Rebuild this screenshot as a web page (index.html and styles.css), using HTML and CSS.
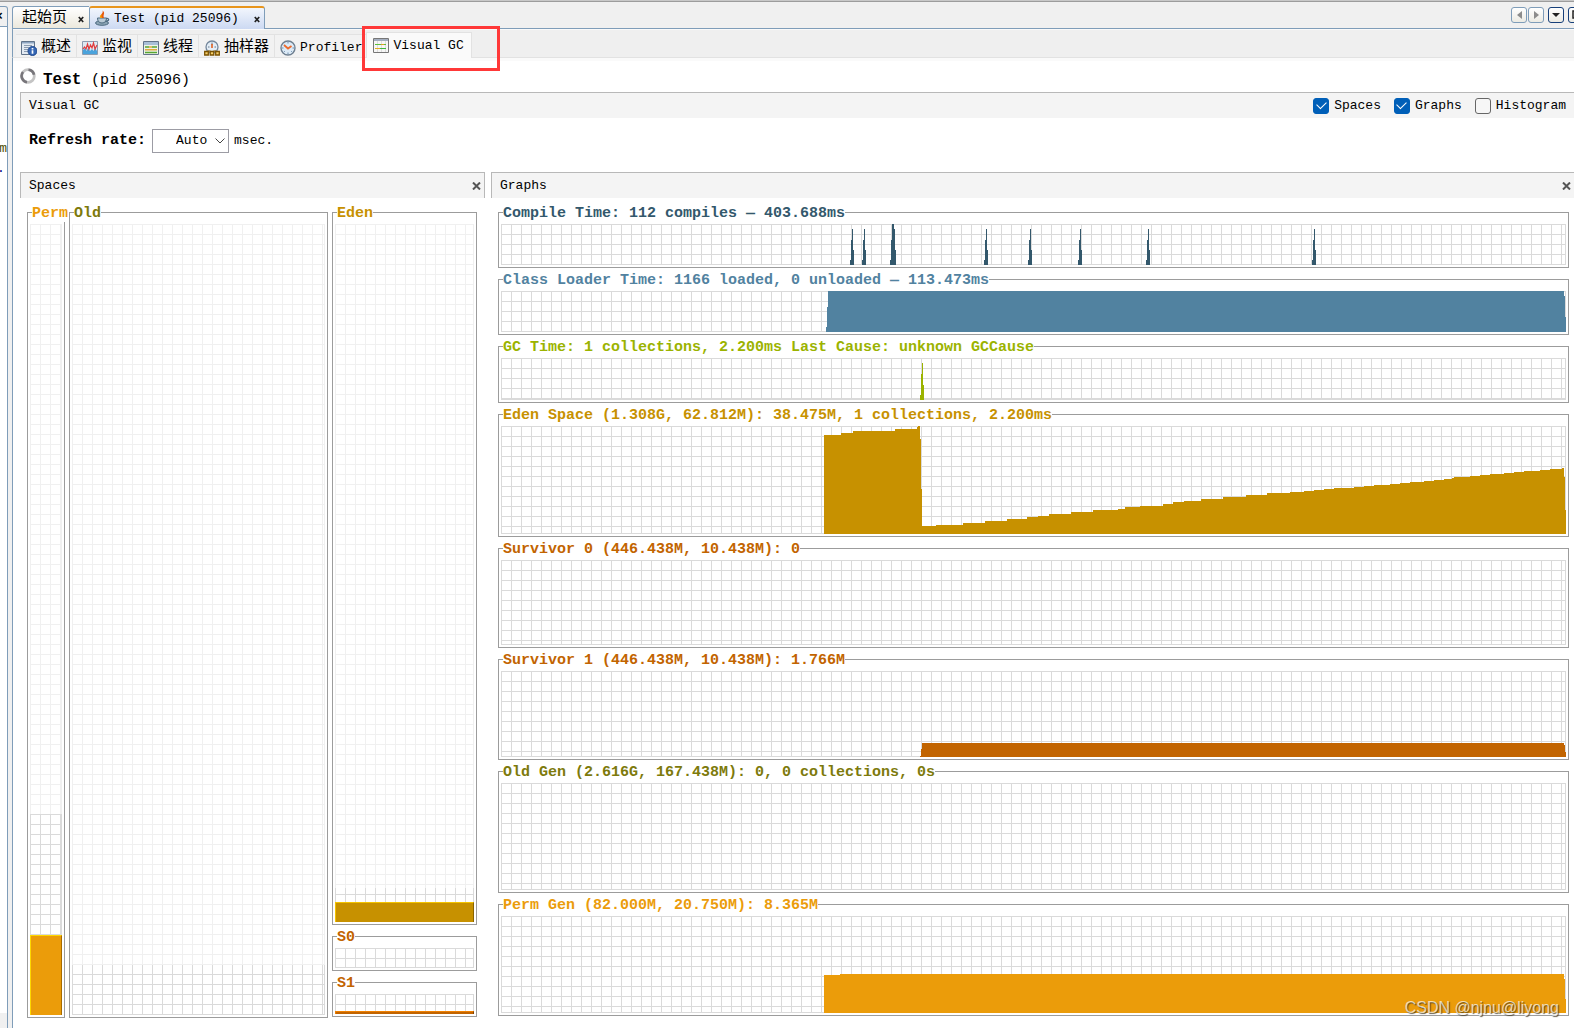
FILE: index.html
```html
<!DOCTYPE html>
<html lang="zh-CN">
<head>
<meta charset="utf-8">
<meta name="viewport" content="width=device-width, initial-scale=1">
<title>Test (pid 25096)</title>
<link rel="stylesheet" href="styles.css">
</head>
<body>
<div class="window">
  <aside class="side">
    <div class="side-tab"><span>×</span></div>
    <div class="side-body">
      <div class="side-line olive">em</div>
      <div class="side-line navy">.</div>
    </div>
    <div class="side-foot"></div>
  </aside>

  <main class="main">
    <nav class="docs">
      <div class="doc"><span class="cjk">起始页</span><button class="doc-close" aria-label="关闭起始页"><svg width="6" height="7" viewBox="0 0 6 7"><path d="M.8 1l4.4 5M5.2 1L.8 6" stroke="#222" stroke-width="1.7"/></svg></button></div>
      <div class="doc current">
        <svg class="icon" width="16" height="16" viewBox="0 0 16 16"><ellipse cx="7" cy="13" rx="6.500" ry="2.300" fill="#8aa3b4" stroke="#4c6a80"/><path d="M2.500 8h9c0 3-1.500 5-4.500 5S2.500 11 2.500 8z" fill="#b9cad6" stroke="#4c6a80"/><path d="M11.500 8.500c3-.5 3 2.500-1 3" fill="none" stroke="#4c6a80" stroke-width="1.300"/><path d="M7 8C3 5 9 4 7.500.5 11 3 7.500 4.500 9 8z" fill="#e8590c"/><path d="M5.500 8C4 6 6 5 6.500 4 7 6 6 6.500 7 8z" fill="#f59f00"/></svg>
        <span>Test (pid 25096)</span>
        <button class="doc-close" aria-label="关闭 Test"><svg width="6" height="7" viewBox="0 0 6 7"><path d="M.8 1l4.4 5M5.2 1L.8 6" stroke="#222" stroke-width="1.7"/></svg></button>
      </div>
      <div class="doc-tools">
        <div class="pair">
          <button class="tool" aria-label="上一个"><svg width="5" height="8" viewBox="0 0 5 8"><path d="M5 0v8L0 4z" fill="#8c8c8c"/></svg></button>
          <button class="tool" aria-label="下一个"><svg width="5" height="8" viewBox="0 0 5 8"><path d="M0 0v8l5-4z" fill="#8c8c8c"/></svg></button>
        </div>
        <button class="tool strong" aria-label="列表"><svg width="8" height="4" viewBox="0 0 8 4"><path d="M0 0h8L4 4z" fill="#222"/></svg></button>
        <button class="tool strong" aria-label="最大化"><svg width="9" height="9" viewBox="0 0 9 9"><path d="M1 1h7v7H1z" fill="none" stroke="#222" stroke-width="1.500"/></svg></button>
      </div>
    </nav>

    <nav class="views">
      <button class="view cjk">
        <svg class="icon" width="16" height="16" viewBox="0 0 16 16"><path d="M.5 1.500h13v13H.5z" fill="#e3eaf2" stroke="#62748a"/><path d="M1 2h12v1.500H1z" fill="#8ea6c2"/><path d="M3 5.500h8M3 7.500h5M3 9.500h4M3 11.500h4" stroke="#8c9cb0"/><circle cx="11.500" cy="11" r="4.500" fill="#3567b5" stroke="#20488c"/><path d="M11.500 8v1.500M11.500 10.300v3.500" stroke="#fff" stroke-width="1.700"/></svg>概述</button>
      <button class="view cjk">
        <svg class="icon" width="16" height="16" viewBox="0 0 16 16"><path d="M.5 1.500h15v13H.5z" fill="#dfe9f2" stroke="#8b9cb0"/><path d="M1 14v-4l2-2 1.500 3L6 8l2 3 2-2 1.500 2L13 8l2 3v3z" fill="#4aa3dc"/><path d="M1 9l1.500-2L4 9l1.500-5L7 9l1.500-4L10 8l1.500-5L13 9l2-4" fill="none" stroke="#e03c3c" stroke-width="1.200"/></svg>监视</button>
      <button class="view cjk">
        <svg class="icon" width="16" height="16" viewBox="0 0 16 16"><path d="M.5 1.500h15v13H.5z" fill="#eef3ea" stroke="#64748a"/><path d="M1 2h14v3H1z" fill="#a9bfd8"/><path d="M2 7h4M9 7h5" stroke="#56a532" stroke-width="1.500"/><path d="M6 7h3M2 9.800h12" stroke="#e0a83c" stroke-width="1.500"/><path d="M2 12.500h12" stroke="#56a532" stroke-width="1.500"/></svg>线程</button>
      <button class="view cjk">
        <svg class="icon" width="16" height="16" viewBox="0 0 16 16"><circle cx="8" cy="7" r="6" fill="#e3edf6" stroke="#75889c" stroke-width="1.300"/><path d="M8 2.500V5M4 7h1.500M10.500 7H12" stroke="#687888"/><path d="M8 4v4" stroke="#e06020" stroke-width="1.600"/><path d="M.7 11.500h3.600v3.500H.7zM6.200 11.500h3.600v3.500H6.200zM11.700 11.500h3.600v3.500h-3.600z" fill="#f6cf6a" stroke="#7a5200" stroke-width="1.300"/><path d="M4 11h2.500M9.500 11H12" stroke="#7a5200"/></svg>抽样器</button>
      <button class="view">
        <svg class="icon" width="16" height="16" viewBox="0 0 16 16"><circle cx="8" cy="8" r="7" fill="#dceaf6" stroke="#6e7f90" stroke-width="1.400"/><path d="M8 2v1.500M8 12.500V14M2 8h1.500M12.500 8H14M4 12l.8-.8M12 12l-.8-.8" stroke="#6e8fb0"/><path d="M4 5l4 3.500 3.500-2.500" fill="none" stroke="#ec6a2c" stroke-width="1.800"/></svg>Profiler</button>
      <div class="view-current">
        <button class="view current">
          <svg class="icon" width="16" height="16" viewBox="0 0 16 16"><path d="M.5.5h15v14H.5z" fill="#f6f6f6" stroke="#777"/><path d="M1 1h14v2H1z" fill="#a4aebf"/><path d="M4.500 3v11M8.500 3v11M12.500 3v11" stroke="#ddd"/><path d="M2 6.500h6M11 6.500h2" stroke="#5cc03c"/><path d="M8 6.500h3" stroke="#e0a020"/><path d="M2 10.500h5" stroke="#e0b020"/><path d="M7 10.500h6" stroke="#3cb83c"/></svg>Visual GC</button>
        <span class="marker"></span>
      </div>
    </nav>
    <div class="strip"></div>

    <header class="title">
      <svg class="icon" width="16" height="16" viewBox="0 0 16 16"><circle cx="8" cy="8" r="6.300" fill="none" stroke="#c4c4c4" stroke-width="2.800"/><path d="M3 4A6.300 6.300 0 0 0 7 14.200M8.500 1.700a6.300 6.300 0 0 1 5.500 5" fill="none" stroke="#77757a" stroke-width="2.600"/></svg>
      <h1>Test <span>(pid 25096)</span></h1>
    </header>

    <div class="content">
      <div class="bar">
        <h2>Visual GC</h2>
        <div class="checks">
          <label class="check"><input type="checkbox" checked>Spaces</label>
          <label class="check"><input type="checkbox" checked>Graphs</label>
          <label class="check"><input type="checkbox">Histogram</label>
        </div>
      </div>

      <div class="refresh">
        <label for="rate">Refresh rate:</label>
        <span class="combo">
          <select id="rate"><option>Auto</option></select>
          <svg width="10" height="6" viewBox="0 0 10 6"><path d="M.5.5L5 5 9.500.5" fill="none" stroke="#444"/></svg>
        </span>
        <span>msec.</span>
      </div>

      <div class="panels">
        <section class="panel spaces">
          <div class="bar closed">
            <h2>Spaces</h2>
            <button class="close" aria-label="Close Spaces"><svg width="9" height="8" viewBox="0 0 9 8"><path d="M1 .5l7 7M8 .5l-7 7" stroke="#555" stroke-width="2"/></svg></button>
          </div>
          <div class="space-grid">
            <div class="box perm"><h3>Perm</h3>
              <div class="plot stack"><div class="reserve" style="height:74.6%"></div><div class="used" style="height:10.1%"></div></div></div>
            <div class="box old"><h3>Old</h3>
              <div class="plot stack"><div class="reserve" style="height:93.7%"></div></div></div>
            <div class="young">
              <div class="box eden"><h3>Eden</h3>
                <div class="plot stack"><div class="reserve" style="height:95.1%"></div><div class="used" style="height:2.9%"></div></div></div>
              <div class="box surv"><h3>S0</h3><div class="plot stack"></div></div>
              <div class="box surv"><h3>S1</h3>
                <div class="plot stack"><div class="used" style="height:15%"></div></div></div>
            </div>
          </div>
        </section>

        <section class="panel graphs">
          <div class="bar">
            <h2>Graphs</h2>
            <button class="close" aria-label="Close Graphs"><svg width="9" height="8" viewBox="0 0 9 8"><path d="M1 .5l7 7M8 .5l-7 7" stroke="#555" stroke-width="2"/></svg></button>
          </div>
          <div class="graph-grid">
            <div class="box compile"><h3>Compile Time: 112 compiles — 403.688ms</h3>
              <svg class="plot" viewBox="0 0 1065 41" preserveAspectRatio="none">
                <defs><path id="spike" d="M0 41V36H1V16H2V5H3V26H4V41z"/></defs>
                <use href="#spike" x="349"/><use href="#spike" x="361"/>
                <path d="M389 41V36H390V16H391V0H393V5H394V26H395V41z"/>
                <use href="#spike" x="483"/><use href="#spike" x="527"/><use href="#spike" x="577"/><use href="#spike" x="645"/><use href="#spike" x="811"/>
              </svg></div>
            <div class="box loader"><h3>Class Loader Time: 1166 loaded, 0 unloaded — 113.473ms</h3>
              <svg class="plot" viewBox="0 0 1065 41" preserveAspectRatio="none"><path d="M325 41V36H326V16H327V0H1063V5H1064V26H1065V41z"/></svg></div>
            <div class="box gc"><h3>GC Time: 1 collections, 2.200ms Last Cause: unknown GCCause</h3>
              <svg class="plot" viewBox="0 0 1065 41" preserveAspectRatio="none"><use href="#spike" x="419"/></svg></div>
            <div class="box eden"><h3>Eden Space (1.308G, 62.812M): 38.475M, 1 collections, 2.200ms</h3>
              <svg class="plot" viewBox="0 0 1065 108" preserveAspectRatio="none"><path d="M323 108V9H340V7H352V5H394V3H416V1H417V0H419V13H420V63H421V100H435V99H462V97H484V95H506V93H526V91H537V90H548V88H570V86H592V84H617V83H624V81H639V80H662V78H672V76H683V75H700V73H722V71H745V69H766V67H789V66H803V65H813V64H823V63H833V62H853V61H863V60H873V59H889V58H899V57H909V56H923V55H933V54H943V53H951V52H953V51H969V50H979V49H989V48H1003V47H1013V46H1023V45H1039V44H1049V43H1061V42H1063V51H1064V84H1065V108z"/></svg></div>
            <div class="box surv"><h3>Survivor 0 (446.438M, 10.438M): 0</h3>
              <svg class="plot" viewBox="0 0 1065 85" preserveAspectRatio="none"></svg></div>
            <div class="box surv"><h3>Survivor 1 (446.438M, 10.438M): 1.766M</h3>
              <svg class="plot" viewBox="0 0 1065 85" preserveAspectRatio="none"><path d="M419 85V84H420V77H421V71H1063V73H1064V80H1065V85z"/></svg></div>
            <div class="box old"><h3>Old Gen (2.616G, 167.438M): 0, 0 collections, 0s</h3>
              <svg class="plot" viewBox="0 0 1065 107" preserveAspectRatio="none"></svg></div>
            <div class="box perm"><h3>Perm Gen (82.000M, 20.750M): 8.365M</h3>
              <svg class="plot" viewBox="0 0 1065 97" preserveAspectRatio="none"><path d="M323 97V59H339V58H1063V63H1064V83H1065V97z"/></svg></div>
          </div>
        </section>
      </div>
    </div>
  </main>
  <div class="watermark">CSDN @njnu@liyong</div>
</div>
</body>
</html>
```
FILE: styles.css
```css
* { box-sizing: border-box; }

body {
  margin: 0;
  background: #fff;
  color: #000;
  font: 13px/16px "Liberation Mono", "Noto Sans CJK SC", monospace;
}

h1, h2, h3 { margin: 0; font: inherit; }

button {
  margin: 0;
  padding: 0;
  border: 0;
  background: none;
  color: inherit;
  font: inherit;
}

svg { display: block; flex: none; }

.window {
  position: relative;
  display: flex;
  gap: 4px;
  min-height: 100vh;
  overflow: hidden;
  border-top: 1px solid #c8c8c8;
  background: #f0f0f0;
  box-shadow: inset 0 1px #9c9c9c;
}

/* Neighbouring window, only its right edge in view */
.side {
  display: flex;
  flex-direction: column;
  width: 8px;
  padding-top: 5px;
  overflow: hidden;
}

.side-tab {
  height: 21px;
  border: solid #7f9db9;
  border-width: 1px 1px 1px 0;
  border-top-right-radius: 3px;
  font-weight: bold;
  line-height: 20px;
  overflow: hidden;
}

.side-tab span { margin-left: -5px; }

.side-body {
  flex: 1;
  padding-top: 114px;
  border-right: 1px solid #7f9db9;
  background: #fff;
}

.side-line { display: flex; height: 20px; }
.olive { justify-content: flex-end; color: #4c4c00; }
.navy { margin-left: -3px; color: #000080; }
.side-foot { height: 15px; border-right: 1px solid #7f9db9; }

.main {
  display: flex;
  flex: 1;
  flex-direction: column;
  min-width: 0;
}

/* Document tabs */
.docs {
  display: flex;
  align-items: flex-end;
  height: 28px;
  border-bottom: 1px solid #7f9db9;
}

.doc {
  display: flex;
  align-items: center;
  height: 22px;
  padding: 3px 5px 0 9px;
  border: solid #7f9db9;
  border-width: 1px 0 0 1px;
  border-radius: 3px 0 0 0;
  background: linear-gradient(#fff, #ece9dd);
}

.doc-close { margin-left: 11px; }

.doc.current {
  height: 23px;
  margin-bottom: -1px;
  padding: 1px 4px 0 5px;
  border-width: 2px 1px 0;
  border-top-color: #e8951c;
  border-radius: 3px 3px 0 0;
  background: linear-gradient(#f2f6fd, #ccd9f2);
}

.doc.current .icon { margin: 0 3px 2px 0; }
.doc.current .doc-close { margin-left: 15px; }

.doc-tools {
  display: flex;
  align-self: center;
  gap: 4px;
  margin: 0 -10px 0 auto;
}

.pair { display: flex; gap: 1px; }

.tool {
  display: grid;
  place-items: center;
  width: 16px;
  height: 16px;
  border: 1px solid #7f9db9;
  border-radius: 3px;
  background: linear-gradient(#fff, #ecebe4);
}

.tool.strong { border-color: #17407a; }

/* View tabs */
.views {
  display: flex;
  align-items: flex-end;
  height: 29px;
  padding-left: 3px;
  border-left: 1px solid #7f9db9;
  border-bottom: 1px solid #e2e2e2;
  background: #efefef;
  box-shadow: inset 0 1px #fafafa;
}

.view {
  display: flex;
  align-items: center;
  gap: 4px;
  height: 23px;
  padding: 3px 5px 0;
  border: solid #e2e2e2;
  border-width: 1px 1px 0 0;
  background: #f2f2f2;
  white-space: nowrap;
}

.cjk { font-size: 15px; }

.view-current { position: relative; margin: 0 0 -1px -2px; }

.view.current {
  height: 26px;
  padding: 0 7px 0 6px;
  border-left-width: 1px;
  background: #fafafa;
}

.marker {
  position: absolute;
  top: -6px;
  left: -4px;
  width: 138px;
  height: 45px;
  border: 3px solid #ff3838;
  pointer-events: none;
}

.strip { height: 3px; border-left: 1px solid #7f9db9; background: #fafafa; }

.title {
  display: flex;
  gap: 7px;
  height: 31px;
  padding: 7px 0 0 7px;
  border-left: 1px solid #7f9db9;
  background: #fff;
}

.title h1 { padding-top: 4px; font-size: 16px; font-weight: bold; }
.title span { font-size: 15px; font-weight: normal; }

.content {
  display: flex;
  flex: 1;
  flex-direction: column;
  padding-left: 7px;
  border-left: 1px solid #7f9db9;
  background: #fff;
}

.bar {
  display: flex;
  align-items: center;
  justify-content: space-between;
  height: 26px;
  padding: 0 3px 0 8px;
  border: solid #b8b8b8;
  border-width: 1px 0 0 1px;
  background: #f4f4f4;
}

.bar.closed { border-right-width: 1px; }

.checks { display: flex; gap: 13px; padding-right: 5px; }
.check { display: flex; align-items: center; gap: 5px; }

.check input {
  display: grid;
  place-items: center;
  appearance: none;
  width: 16px;
  height: 16px;
  margin: 0;
  border: 1px solid #666;
  border-radius: 3px;
  background: #f6f6f6;
}

.check input:checked { border-color: #005fb8; background: #005fb8; }

.check input:checked::after {
  content: "";
  width: 8px;
  height: 5px;
  margin-top: -3px;
  border: solid #fff;
  border-width: 0 0 1px 1px;
  transform: rotate(-45deg);
}

.refresh {
  display: flex;
  align-items: center;
  gap: 5px;
  height: 54px;
  padding: 0 9px 9px;
}

.refresh label { padding-right: 1px; font-size: 15px; font-weight: bold; }
.combo { position: relative; }

.combo select {
  display: block;
  appearance: none;
  width: 77px;
  height: 24px;
  padding: 0 0 0 23px;
  border: 1px solid #9c9ca4;
  border-radius: 0;
  background: #fff;
  color: #000;
  font: inherit;
}

.combo svg { position: absolute; top: 9px; right: 4px; pointer-events: none; }

/* Panels */
.panels {
  display: grid;
  flex: 1;
  grid-template-columns: minmax(0, 465fr) minmax(0, 1083fr);
  gap: 6px;
}

.panel { display: flex; flex-direction: column; }

.space-grid {
  display: grid;
  flex: 1;
  grid-template-columns: minmax(0, 38fr) minmax(0, 259fr) minmax(0, 145fr);
  gap: 4px;
  padding: 14px 8px 10px 7px;
}

.young {
  display: grid;
  grid-template-rows: 1fr 35px 35px;
  gap: 11px;
  padding-bottom: 1px;
}

.graph-grid {
  display: grid;
  flex: 1;
  grid-template-rows: 56fr 56fr 57fr 123fr 100fr 101fr 122fr 112fr;
  gap: 11px;
  padding: 14px 5px 12px 7px;
}

.box {
  display: flex;
  flex-direction: column;
  align-items: flex-start;
  min-height: 0;
  padding: 0 2px 2px;
  border: 1px solid #9c9c9c;
  color: var(--ink);
}

.box h3 {
  margin: -7px 0 2px 2px;
  background: #fff;
  font-size: 15px;
  font-weight: bold;
  white-space: nowrap;
}

.plot {
  --line: #dadada;
  flex: 1 1 0;
  width: 100%;
  min-height: 0;
  background-image:
    linear-gradient(var(--line), var(--line)),
    linear-gradient(var(--line), var(--line)),
    linear-gradient(90deg, var(--line) 1px, transparent 1px),
    linear-gradient(var(--line) 1px, transparent 1px);
  background-position: right top, left bottom, left top, left top;
  background-repeat: no-repeat, no-repeat, repeat, repeat;
  background-size: 1px 100%, 100% 1px, 10px 10px, 10px 10px;
  fill: var(--ink);
  shape-rendering: crispEdges;
}

.stack { display: flex; flex-direction: column; }

.reserve {
  --line: #f0f0f0;
  background-color: #fff;
  background-image:
    linear-gradient(var(--line), var(--line)),
    linear-gradient(90deg, var(--line) 1px, transparent 1px),
    linear-gradient(var(--line) 1px, transparent 1px);
  background-position: right top, left top, left top;
  background-repeat: no-repeat, repeat, repeat;
  background-size: 1px 100%, 10px 10px, 10px 10px;
}

.used {
  margin-top: auto;
  border: solid var(--lit);
  border-width: 1px 1px 0;
  border-right-color: var(--shade);
  background: var(--ink);
}

.perm { --ink: #eb9c0a; --lit: #ffd800; --shade: #a86c00; }
.old { --ink: #7d7a0c; }
.eden { --ink: #c79100; --lit: #f5c400; --shade: #8a6400; }
.surv { --ink: #c26400; --lit: #f08000; --shade: #804000; }
.compile { --ink: #33586c; }
.loader { --ink: #5182a0; }
.gc { --ink: #9bb300; }

.watermark {
  position: absolute;
  right: 15px;
  bottom: 10px;
  color: rgba(255, 255, 255, 0.7);
  font: 16px/20px "Liberation Sans", sans-serif;
  text-shadow: 1px 1px 1px rgba(60, 50, 30, 0.8);
  pointer-events: none;
}
```
